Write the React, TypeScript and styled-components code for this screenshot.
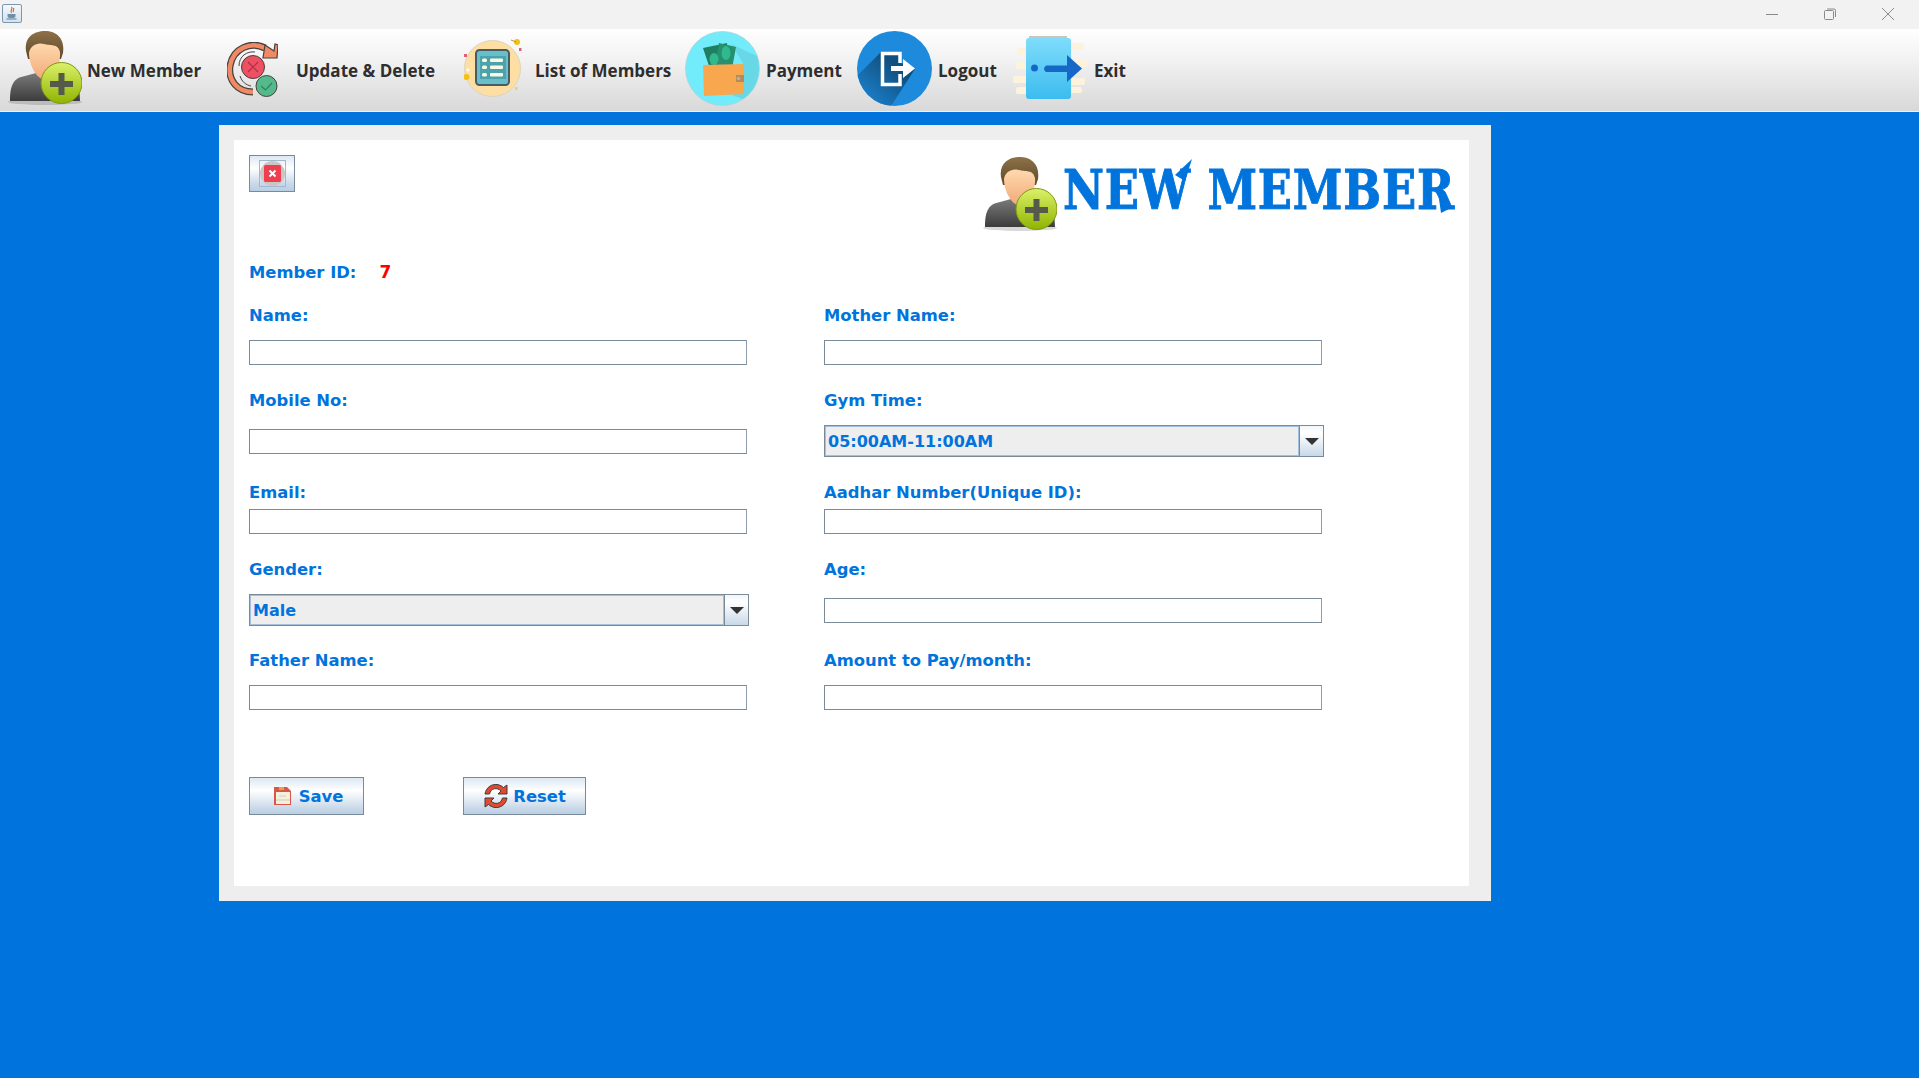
import React from "react";
import styled, { createGlobalStyle } from "styled-components";

const GlobalStyle = createGlobalStyle`
  html, body {
    margin: 0;
    padding: 0;
    height: 100%;
    background: #0074dc;
  }
  #root {
    height: 100%;
  }
`;

const Page = styled.div`
  width: 1919px;
  height: 1078px;
  overflow: hidden;
  display: flex;
  flex-direction: column;
  background: #0074dc;
`;

// Window title bar
const TitleBar = styled.div`
  height: 29px;
  flex: none;
  display: flex;
  align-items: flex-start;
  justify-content: space-between;
  background: #f2f2f2;
`;

const AppIcon = styled.div`
  width: 20px;
  height: 19px;
  box-sizing: border-box;
  margin: 4px 0 0 2px;
  border: 1px solid #7b97ad;
  border-radius: 2px;
  background: linear-gradient(#f5f8fb, #d5e2ee);
  display: flex;
  align-items: center;
  justify-content: center;
`;

const WindowControls = styled.div`
  display: flex;
  margin-right: 2px;
`;

const WindowControl = styled.div`
  width: 58px;
  height: 28px;
  display: flex;
  align-items: center;
  justify-content: center;
`;

// Toolbar
const ToolBar = styled.div`
  height: 82px;
  flex: none;
  display: flex;
  padding-left: 7px;
  border-bottom: 1px solid #f0f0f0;
  background: linear-gradient(#ffffff, #f3f3f3 35%, #d8d8d8);
`;

const ToolItem = styled.div<{ $width: number }>`
  width: ${(p) => p.$width}px;
  flex: none;
  display: flex;
  align-items: center;
`;

const ToolIconSlot = styled.div<{ $width: number; $height: number }>`
  width: ${(p) => p.$width}px;
  height: ${(p) => p.$height}px;
  flex: none;
  align-self: flex-start;
  display: flex;
  align-items: center;
`;

const ToolLabel = styled.span`
  font: 700 17px "Open Sans", sans-serif;
  color: #2e2e2e;
  white-space: nowrap;
`;

// Main panel
const Content = styled.div`
  flex: 1;
  padding: 13px 0 0 219px;
`;

const Panel = styled.div`
  width: 1235px;
  height: 746px;
  padding: 15px 22px 15px 15px;
  background: #eeeeee;
`;

const Card = styled.div`
  height: 100%;
  box-sizing: border-box;
  padding: 15px 16px 0 15px;
  background: #ffffff;
`;

const Header = styled.div`
  height: 105px;
  display: flex;
  justify-content: space-between;
  align-items: flex-start;
`;

const CloseButton = styled.div`
  width: 46px;
  height: 37px;
  box-sizing: border-box;
  border: 1px solid #7a8a99;
  background: linear-gradient(#dde8f3, #ffffff 35%, #c8d8e8 80%, #b8cfe5);
  display: flex;
  align-items: center;
  justify-content: center;
`;

const CloseFocus = styled.div`
  width: 27px;
  height: 27px;
  box-sizing: border-box;
  border: 1px solid #a3b8cc;
  display: flex;
  align-items: center;
  justify-content: center;
`;

const Brand = styled.div`
  display: flex;
  align-items: flex-start;
  margin-top: 2px;
`;

const BrandTitleWrap = styled.div`
  position: relative;
  width: 390px;
  margin-left: 6px;
`;

const BrandTitle = styled.h1`
  margin: -3px 0 0;
  font: 700 54px/72px "DejaVu Serif", serif;
  letter-spacing: 1px;
  -webkit-text-stroke: 1px #0074dc;
  color: #0074dc;
  white-space: nowrap;
  transform: scaleX(0.83);
  transform-origin: left center;
`;

const BrandFlourish = styled.svg`
  position: absolute;
  left: 0;
  top: 0;
`;

const MemberRow = styled.div`
  height: 24px;
  display: flex;
  align-items: center;
`;

const FieldLabel = styled.label`
  height: 24px;
  display: flex;
  align-items: center;
  font: 700 16.4px "DejaVu Sans", sans-serif;
  color: #0074dc;
  white-space: nowrap;
`;

const MemberValue = styled.span`
  margin-left: 23px;
  font: 700 17px "DejaVu Sans", sans-serif;
  color: #ff0000;
`;

const FormRow = styled.div<{ $top: number }>`
  margin-top: ${(p) => p.$top}px;
  display: grid;
  grid-template-columns: 498px 500px;
  column-gap: 77px;
`;

const Field = styled.div`
  display: flex;
  flex-direction: column;
`;

const ControlSlot = styled.div<{ $height: number }>`
  height: ${(p) => p.$height}px;
  display: flex;
  align-items: center;
`;

const TextInput = styled.input`
  width: 498px;
  height: 25px;
  box-sizing: border-box;
  padding: 0 3px;
  border: 1px solid #7a8a99;
  border-right-color: #8f9dab;
  background: #ffffff;
  outline: none;
`;

const Combo = styled.div`
  width: 500px;
  height: 32px;
  flex: none;
  box-sizing: border-box;
  display: flex;
  border: 1px solid #7a8a99;
`;

const ComboValue = styled.div`
  flex: 1;
  display: flex;
  align-items: center;
  padding: 1px 0 0 2px;
  border: 1px solid #a3c0dc;
  background: #eeeeee;
  font: 700 16px "DejaVu Sans", sans-serif;
  color: #0074dc;
`;

const ComboArrow = styled.div`
  width: 24px;
  flex: none;
  box-sizing: border-box;
  display: flex;
  align-items: center;
  justify-content: center;
  border-left: 1px solid #7a8a99;
  background: linear-gradient(#f2f6fa, #ffffff 25%, #c8d8e8);
`;

const ArrowGlyph = styled.span`
  width: 0;
  height: 0;
  border-left: 7px solid transparent;
  border-right: 7px solid transparent;
  border-top: 7px solid #333333;
`;

const Actions = styled.div`
  margin-top: 54px;
  display: flex;
  gap: 99px;
`;

const ActionButton = styled.button<{ $width: number; $shift: number }>`
  width: ${(p) => p.$width}px;
  height: 38px;
  padding: 0 0 0 ${(p) => p.$shift}px;
  border: 1px solid #7a8a99;
  background: linear-gradient(#dde8f3, #ffffff 35%, #c8d8e8 85%, #b8cfe5);
  display: flex;
  align-items: center;
  justify-content: center;
  font: 700 16.4px "DejaVu Sans", sans-serif;
  color: #0074dc;
`;

const ActionIcon = styled.span<{ $gap: number }>`
  display: flex;
  margin-right: ${(p) => p.$gap}px;
`;

// Icons
const PersonAddIcon = () => (
  <svg width="75" height="75" viewBox="0 0 75 75">
    <defs>
      <linearGradient id="pa-face" x1="0" y1="0" x2="0" y2="1">
        <stop offset="0" stopColor="#ffd9ae" />
        <stop offset="1" stopColor="#f2a877" />
      </linearGradient>
      <linearGradient id="pa-hair" x1="0" y1="0" x2="0" y2="1">
        <stop offset="0" stopColor="#8d7148" />
        <stop offset="1" stopColor="#5f4a2c" />
      </linearGradient>
      <linearGradient id="pa-body" x1="0" y1="0" x2="0" y2="1">
        <stop offset="0" stopColor="#7a7a7a" />
        <stop offset="1" stopColor="#3c3c3c" />
      </linearGradient>
      <linearGradient id="pa-badge" x1="0" y1="0" x2="0" y2="1">
        <stop offset="0" stopColor="#dcf06a" />
        <stop offset="1" stopColor="#8fb400" />
      </linearGradient>
    </defs>
    <ellipse cx="38" cy="71" rx="37" ry="3" fill="#000" opacity="0.15" />
    <path d="M3 70 C3 53 7 47 18 45 L29 42 H46 L60 46 C70 49 73 54 73 70 Z" fill="url(#pa-body)" />
    <path d="M19 20 C17 6 27 0 38 0 C49 0 58 7 56 22 L54 28 H21 Z" fill="url(#pa-hair)" />
    <path d="M22 22 C23 15 30 11 37 13 C43 15 51 12 53 21 C54 33 47 47 38 49 C30 48 22 35 22 22 Z" fill="url(#pa-face)" />
    <circle cx="54.5" cy="52" r="20.5" fill="url(#pa-badge)" stroke="#7d9a10" strokeWidth="1" />
    <path d="M54.5 42 V64 M43 53 H66" stroke="#555a4a" strokeWidth="6" />
  </svg>
);

const UpdateIcon = () => (
  <svg width="51" height="55" viewBox="0 0 51 55">
    <path d="M38 6 C24 -1 6 6 3 24 C1 38 10 50 26 50" fill="none" stroke="#47413f" strokeWidth="7" />
    <path d="M38 6 C24 -1 6 6 3 24 C1 38 10 50 26 50" fill="none" stroke="#f08a65" strokeWidth="4.5" />
    <path d="M12 24 C12 14 20 9 28 10 M13 34 C15 40 19 43 24 44" fill="none" stroke="#47413f" strokeWidth="1" />
    <path d="M36 16 L50 16 L51 3 L48 2 L47 9 L38 3 Z" fill="#f08a65" stroke="#47413f" strokeWidth="1.2" />
    <circle cx="26" cy="25" r="11.5" fill="#ef4f63" stroke="#47413f" strokeWidth="1" />
    <path d="M21 20 L31 30 M31 20 L21 30" stroke="#a83345" strokeWidth="1.2" />
    <circle cx="39.5" cy="44" r="10.5" fill="#54b98b" stroke="#47413f" strokeWidth="1" />
    <path d="M34 44 L38.5 48 L45 41" fill="none" stroke="#2f8060" strokeWidth="1.2" />
  </svg>
);

const ListIcon = () => (
  <svg width="58" height="60" viewBox="0 0 58 60">
    <circle cx="28.5" cy="31.5" r="28" fill="#fddfa3" stroke="#ddd3bd" strokeWidth="1" />
    <circle cx="53" cy="5" r="3" fill="#f5c013" />
    <path d="M47 3 L52 5" stroke="#a8926a" strokeWidth="1" />
    <rect x="55" y="11" width="2.5" height="3" fill="#e25e72" />
    <rect x="0" y="17" width="3" height="3" fill="#e25e72" />
    <circle cx="2.5" cy="40" r="3" fill="#f5c013" />
    <circle cx="4" cy="33" r="1.5" fill="#fff" />
    <rect x="51" y="50" width="2.5" height="3" fill="#f1cf6c" />
    <rect x="12" y="13" width="33" height="35" rx="3.5" fill="#66bfc9" stroke="#4c5a66" strokeWidth="2" />
    <rect x="16" y="19" width="26" height="23" fill="#4ba3ae" />
    <rect x="18" y="21.5" width="5" height="3.5" rx="1.5" fill="#fdf6e3" />
    <rect x="26" y="21.5" width="13" height="3.5" rx="1" fill="#fdf6e3" />
    <rect x="18" y="28.5" width="5" height="3.5" rx="1.5" fill="#fdf6e3" />
    <rect x="26" y="28.5" width="13" height="3.5" rx="1" fill="#fdf6e3" />
    <rect x="18" y="36" width="5" height="3.5" rx="1.5" fill="#fdf6e3" />
    <rect x="26" y="36" width="13" height="3.5" rx="1" fill="#fdf6e3" />
  </svg>
);

const PaymentIcon = () => (
  <svg width="75" height="75" viewBox="0 0 75 75">
    <circle cx="37.5" cy="37.5" r="37" fill="#72ecfb" stroke="#a8d4dc" strokeWidth="0.8" />
    <path d="M46 13 L72 25 C77 42 72 58 58 68 L42 62 L58 32 Z" fill="#68d8e6" />
    <path d="M18 17 L42 12 L44 36 L25 38 Z" fill="#1f7f62" />
    <path d="M34 12 L51 16 L47 38 L30 36 Z" fill="#26906f" />
    <ellipse cx="29" cy="28" rx="4.5" ry="6" fill="#2fb98d" />
    <ellipse cx="41" cy="22" rx="4.5" ry="7" fill="#2fb98d" />
    <path d="M18 34 L59 33 V63 L19 65 Z" fill="#f8a74e" />
    <rect x="51" y="44" width="8" height="7" fill="#b58a55" />
    <circle cx="53.5" cy="47.5" r="1.8" fill="#b6b0a3" />
  </svg>
);

const LogoutIcon = () => (
  <svg width="75" height="75" viewBox="0 0 75 75">
    <defs>
      <clipPath id="logout-clip">
        <circle cx="37.5" cy="37.5" r="37.5" />
      </clipPath>
      <linearGradient id="logout-shade" x1="1" y1="0" x2="0" y2="1">
        <stop offset="0.3" stopColor="#10507f" />
        <stop offset="1" stopColor="#1e8adc" />
      </linearGradient>
    </defs>
    <circle cx="37.5" cy="37.5" r="37.5" fill="#1e8adc" />
    <path d="M24 21 L0 45 V62 L24 75 H34 L58 38 L44 32 V21 Z" fill="url(#logout-shade)" clipPath="url(#logout-clip)" />
    <path d="M43 32 V22.5 H25.5 V53.5 H43 V43" fill="none" stroke="#ffffff" strokeWidth="3.5" />
    <path d="M34 35 H46 V28 L58 37.5 L46 47 V40 H34 Z" fill="#ffffff" />
  </svg>
);

const ExitIcon = () => (
  <svg width="75" height="64" viewBox="0 0 75 64">
    <defs>
      <linearGradient id="exit-door" x1="0" y1="0" x2="0" y2="1">
        <stop offset="0" stopColor="#7fdcfb" />
        <stop offset="1" stopColor="#3bbcef" />
      </linearGradient>
    </defs>
    <rect x="16" y="0" width="38" height="3" fill="#c9c5b8" />
    <rect x="54" y="7" width="17" height="7" rx="2" fill="#fdf3dc" />
    <rect x="4" y="12" width="12" height="7" rx="2" fill="#fdf3dc" />
    <rect x="54" y="24" width="21" height="7" rx="2" fill="#fdf3dc" />
    <rect x="3" y="26" width="12" height="7" rx="2" fill="#fdf3dc" />
    <rect x="54" y="42" width="18" height="7" rx="2" fill="#fdf3dc" />
    <rect x="0" y="40" width="15" height="7" rx="2" fill="#fdf3dc" />
    <rect x="3" y="51" width="12" height="7" rx="2" fill="#fdf3dc" />
    <rect x="54" y="51" width="15" height="6" rx="2" fill="#fdf3dc" />
    <rect x="13" y="2" width="45" height="61" rx="3" fill="url(#exit-door)" />
    <circle cx="21.5" cy="32" r="3.5" fill="#1668c8" />
    <path d="M33 29.5 H54 V19 L69 32.5 L54 46 V36 H33 Q29 33 33 29.5 Z" fill="#1668c8" />
  </svg>
);

const CupIcon = () => (
  <svg width="14" height="15" viewBox="0 0 13 15">
    <path d="M6 1 C8 3 4 4 6 7 M8 2 C9 4 7 4 8 6" fill="none" stroke="#d9662a" strokeWidth="1.2" />
    <path d="M2 8 H10 V10 C10 12 8 12 6 12 C4 12 2 12 2 10 Z" fill="#6f8fa8" />
    <path d="M1 13 H11" stroke="#6f8fa8" strokeWidth="1.2" />
  </svg>
);

const CloseGlyph = () => (
  <svg width="25" height="25" viewBox="0 0 25 25">
    <circle cx="12.5" cy="12.5" r="12.5" fill="#c9c6c4" />
    <rect x="4" y="4" width="17" height="17" rx="1.5" fill="#ef3e50" />
    <path d="M9.5 9.5 L15.5 15.5 M15.5 9.5 L9.5 15.5" stroke="#ffffff" strokeWidth="2" />
  </svg>
);

const SaveIcon = () => (
  <svg width="18" height="18" viewBox="0 0 18 18">
    <path d="M1 0 H14 L18 4 V18 H1 Z" fill="#d8574a" />
    <rect x="6" y="0" width="5" height="3" fill="#e2a73a" />
    <rect x="3" y="5" width="14" height="12" fill="#f3f0dc" />
    <path d="M3 13 H17" stroke="#cfcdb9" strokeWidth="1" />
    <path d="M6 9 H13" stroke="#dcdac8" strokeWidth="1.5" />
  </svg>
);

const ResetIcon = () => (
  <svg width="26" height="26" viewBox="0 0 26 26">
    <g fill="#e04a30" stroke="#3d3d3d" strokeWidth="1">
      <path d="M2 11 C3 4 9 1 14 1.5 C17 2 19 3 20.5 4.5 L24 2 V11 H15 L18 8 C14 4 8 5 6.5 11 Z" />
      <path d="M24 15 C23 22 17 25 12 24.5 C9 24 7 23 5.5 21.5 L2 24 V15 H11 L8 18 C12 22 18 21 19.5 15 Z" />
    </g>
  </svg>
);

// slotHeight moves the icon up or down: the icon is centred in the slot
const tools = [
  { label: "New Member", width: 220, slot: 80, slotHeight: 79, icon: <PersonAddIcon /> },
  { label: "Update & Delete", width: 237, slot: 69, slotHeight: 81, icon: <UpdateIcon /> },
  { label: "List of Members", width: 221, slot: 71, slotHeight: 75, icon: <ListIcon /> },
  { label: "Payment", width: 172, slot: 81, slotHeight: 79, icon: <PaymentIcon /> },
  { label: "Logout", width: 156, slot: 81, slotHeight: 79, icon: <LogoutIcon /> },
  { label: "Exit", width: 120, slot: 81, slotHeight: 78, icon: <ExitIcon /> },
];

const App = () => {
  return (
    <Page>
      <GlobalStyle />
      <TitleBar>
        <AppIcon>
          <CupIcon />
        </AppIcon>
        <WindowControls>
          <WindowControl>
            <svg width="12" height="12" viewBox="0 0 12 12">
              <path d="M0 6.5 H12" stroke="#8a8a8a" strokeWidth="1" />
            </svg>
          </WindowControl>
          <WindowControl>
            <svg width="12" height="12" viewBox="0 0 12 12">
              <rect x="0.5" y="2.5" width="9" height="9" rx="1" fill="none" stroke="#8a8a8a" />
              <path d="M3 1 H10 Q11.5 1 11.5 2.5 V9" fill="none" stroke="#8a8a8a" />
            </svg>
          </WindowControl>
          <WindowControl>
            <svg width="12" height="12" viewBox="0 0 12 12">
              <path d="M0 0 L12 12 M12 0 L0 12" stroke="#8a8a8a" strokeWidth="1" />
            </svg>
          </WindowControl>
        </WindowControls>
      </TitleBar>

      <ToolBar>
        {tools.map((tool) => (
          <ToolItem key={tool.label} $width={tool.width}>
            <ToolIconSlot $width={tool.slot} $height={tool.slotHeight}>
              {tool.icon}
            </ToolIconSlot>
            <ToolLabel>{tool.label}</ToolLabel>
          </ToolItem>
        ))}
      </ToolBar>

      <Content>
        <Panel>
          <Card>
            <Header>
              <CloseButton>
                <CloseFocus>
                  <CloseGlyph />
                </CloseFocus>
              </CloseButton>
              <Brand>
                <PersonAddIcon />
                <BrandTitleWrap>
                  <BrandTitle>NEW MEMBER</BrandTitle>
                  <BrandFlourish width="400" height="60" viewBox="0 0 400 60">
                    <path d="M112 18 L129 2 L122 24 Z" fill="#0074dc" />
                    <path d="M376 42 L390 50 L378 56 Z" fill="#0074dc" />
                  </BrandFlourish>
                </BrandTitleWrap>
              </Brand>
            </Header>

            <MemberRow>
              <FieldLabel>Member ID:</FieldLabel>
              <MemberValue>7</MemberValue>
            </MemberRow>

            <FormRow $top={19}>
              <Field>
                <FieldLabel>Name:</FieldLabel>
                <ControlSlot $height={51}>
                  <TextInput />
                </ControlSlot>
              </Field>
              <Field>
                <FieldLabel>Mother Name:</FieldLabel>
                <ControlSlot $height={51}>
                  <TextInput />
                </ControlSlot>
              </Field>
            </FormRow>

            <FormRow $top={10}>
              <Field>
                <FieldLabel>Mobile No:</FieldLabel>
                <ControlSlot $height={58}>
                  <TextInput />
                </ControlSlot>
              </Field>
              <Field>
                <FieldLabel>Gym Time:</FieldLabel>
                <ControlSlot $height={58}>
                  <Combo>
                    <ComboValue>05:00AM-11:00AM</ComboValue>
                    <ComboArrow>
                      <ArrowGlyph />
                    </ComboArrow>
                  </Combo>
                </ControlSlot>
              </Field>
            </FormRow>

            <FormRow $top={10}>
              <Field>
                <FieldLabel>Email:</FieldLabel>
                <ControlSlot $height={34}>
                  <TextInput />
                </ControlSlot>
              </Field>
              <Field>
                <FieldLabel>Aadhar Number(Unique ID):</FieldLabel>
                <ControlSlot $height={34}>
                  <TextInput />
                </ControlSlot>
              </Field>
            </FormRow>

            <FormRow $top={19}>
              <Field>
                <FieldLabel>Gender:</FieldLabel>
                <ControlSlot $height={58}>
                  <Combo>
                    <ComboValue>Male</ComboValue>
                    <ComboArrow>
                      <ArrowGlyph />
                    </ComboArrow>
                  </Combo>
                </ControlSlot>
              </Field>
              <Field>
                <FieldLabel>Age:</FieldLabel>
                <ControlSlot $height={58}>
                  <TextInput />
                </ControlSlot>
              </Field>
            </FormRow>

            <FormRow $top={9}>
              <Field>
                <FieldLabel>Father Name:</FieldLabel>
                <ControlSlot $height={51}>
                  <TextInput />
                </ControlSlot>
              </Field>
              <Field>
                <FieldLabel>Amount to Pay/month:</FieldLabel>
                <ControlSlot $height={51}>
                  <TextInput />
                </ControlSlot>
              </Field>
            </FormRow>

            <Actions>
              <ActionButton $width={115} $shift={3}>
                <ActionIcon $gap={8}>
                  <SaveIcon />
                </ActionIcon>
                Save
              </ActionButton>
              <ActionButton $width={123} $shift={0}>
                <ActionIcon $gap={4}>
                  <ResetIcon />
                </ActionIcon>
                Reset
              </ActionButton>
            </Actions>
          </Card>
        </Panel>
      </Content>
    </Page>
  );
};

export default App;
